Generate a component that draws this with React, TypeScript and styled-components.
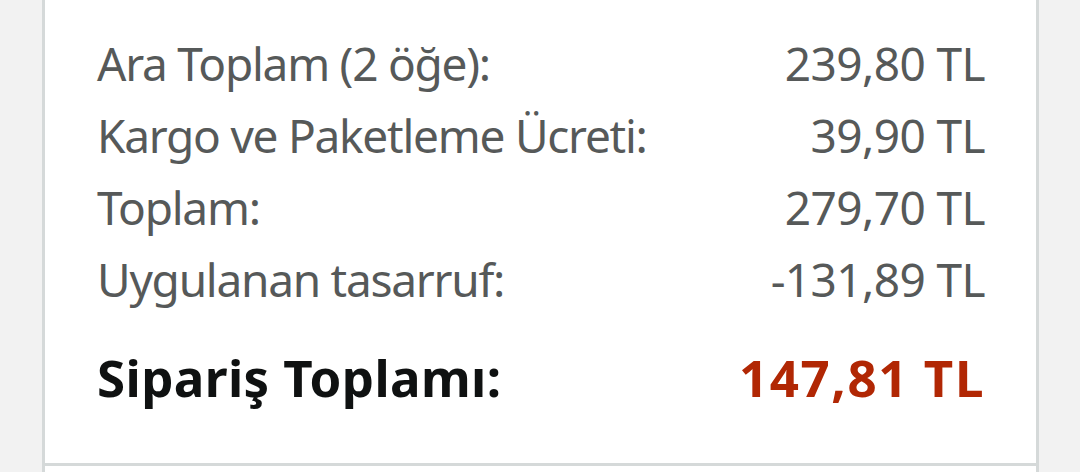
import React from "react";
import styled, { createGlobalStyle } from "styled-components";

const Global = createGlobalStyle`
  html, body { margin: 0; padding: 0; background: #f2f2f2; }
  body { width: 1080px; height: 472px; overflow: hidden; font-family: "Noto Sans", "Open Sans", sans-serif; }
`;

const Page = styled.div`
  padding-left: 42px;
  width: 997px;
  height: 472px;
  display: flex;
  flex-direction: column;
`;

const Card = styled.section`
  background: #ffffff;
  border: 3px solid #d5d9d9;
  border-top: none;
  padding: 27px 51px 44px 52px;
  display: flex;
  flex-direction: column;
`;

const NextCard = styled.div`
  flex: 1;
  background: #ffffff;
  border-left: 3px solid #d5d9d9;
  border-right: 3px solid #d5d9d9;
`;

const Row = styled.div<{ $total?: boolean }>`
  display: flex;
  justify-content: space-between;
  align-items: baseline;
  height: ${(p) => (p.$total ? "84px" : "72px")};
  line-height: ${(p) => (p.$total ? "84px" : "72px")};
  margin-top: ${(p) => (p.$total ? "20px" : "0")};
  font-size: ${(p) => (p.$total ? "51px" : "46px")};
  font-weight: ${(p) => (p.$total ? 700 : 400)};
  letter-spacing: ${(p) => (p.$total ? "0.4px" : "-1.25px")};
  color: ${(p) => (p.$total ? "#0f1111" : "#565959")};
`;

const Amount = styled.span<{ $total?: boolean }>`
  color: ${(p) => (p.$total ? "#b12704" : "inherit")};
  letter-spacing: ${(p) => (p.$total ? "1.6px" : "-0.6px")};
`;

const rows = [
  ["Ara Toplam (2 öğe):", "239,80 TL"],
  ["Kargo ve Paketleme Ücreti:", "39,90 TL"],
  ["Toplam:", "279,70 TL"],
  ["Uygulanan tasarruf:", "-131,89 TL"],
];

export default function App() {
  return (
    <>
      <Global />
      <Page>
        <Card>
          {rows.map(([l, v]) => (
            <Row key={l}>
              <span>{l}</span>
              <Amount>{v}</Amount>
            </Row>
          ))}
          <Row $total>
            <span>Sipariş Toplamı:</span>
            <Amount $total>147,81 TL</Amount>
          </Row>
        </Card>
        <NextCard />
      </Page>
    </>
  );
}
